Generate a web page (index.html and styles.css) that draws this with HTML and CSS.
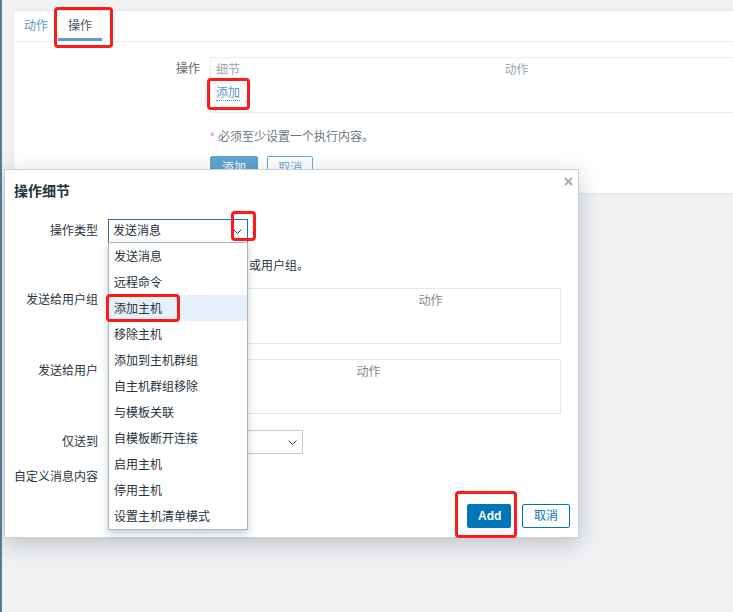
FILE: index.html
```
<!DOCTYPE html>
<html lang="zh-CN">
<head>
    <meta charset="UTF-8">
    <title>动作 | 操作</title>
    <link rel="stylesheet" href="styles.css">
</head>
<body>
    <div class="page">
        <div class="panel">
            <ul class="tabs">
                <li>动作</li>
                <li class="active">操作</li>
            </ul>
            <div class="tab-body">
                <div class="form-row">
                    <div class="form-label">操作</div>
                    <div class="form-field">
                        <table class="list-table op-table">
                            <thead>
                                <tr><th class="col-detail">细节</th><th>动作</th></tr>
                            </thead>
                            <tbody>
                                <tr><td colspan="2"><a class="link-dotted">添加</a></td></tr>
                            </tbody>
                        </table>
                    </div>
                </div>
                <div class="form-row note-row">
                    <div class="form-label"></div>
                    <div class="form-field"><span class="asterisk">*</span> 必须至少设置一个执行内容。</div>
                </div>
                <div class="form-row button-row">
                    <div class="form-label"></div>
                    <div class="form-field">
                        <button class="btn btn-faded">添加</button>
                        <button class="btn btn-faded-alt">取消</button>
                    </div>
                </div>
            </div>
        </div>
    </div>

    <div class="dialog">
        <div class="dialog-title">操作细节</div>
        <span class="dialog-close">
            <svg width="9" height="9" viewBox="0 0 9 9"><path d="M1 1 L8 8 M8 1 L1 8" stroke="#a7b1b8" stroke-width="2"/></svg>
        </span>

        <div class="dialog-form">
            <div class="d-row row-type">
                <div class="d-label">操作类型</div>
                <div class="d-field">
                    <div class="select select-focus">
                        <span>发送消息</span>
                        <svg class="chevron" width="9" height="6" viewBox="0 0 9 6"><path d="M0.5 0.5 L4.5 4.5 L8.5 0.5" fill="none" stroke="#3b474f" stroke-width="1"/></svg>
                        <ul class="dropdown">
                            <li>发送消息</li>
                            <li>远程命令</li>
                            <li class="hover">添加主机</li>
                            <li>移除主机</li>
                            <li>添加到主机群组</li>
                            <li>自主机群组移除</li>
                            <li>与模板关联</li>
                            <li>自模板断开连接</li>
                            <li>启用主机</li>
                            <li>停用主机</li>
                            <li>设置主机清单模式</li>
                        </ul>
                    </div>
                </div>
            </div>

            <div class="d-row row-hint">
                <div class="d-label"></div>
                <div class="d-field hint">或用户组。</div>
            </div>

            <div class="d-row row-groups">
                <div class="d-label">发送给用户组</div>
                <div class="d-field">
                    <table class="list-table dlg-table">
                        <thead><tr><th class="col-groups"></th><th>动作</th></tr></thead>
                        <tbody><tr><td colspan="2"></td></tr></tbody>
                    </table>
                </div>
            </div>

            <div class="d-row row-users">
                <div class="d-label">发送给用户</div>
                <div class="d-field">
                    <table class="list-table dlg-table">
                        <thead><tr><th class="col-users"></th><th>动作</th></tr></thead>
                        <tbody><tr><td colspan="2"></td></tr></tbody>
                    </table>
                </div>
            </div>

            <div class="d-row row-media">
                <div class="d-label">仅送到</div>
                <div class="d-field">
                    <div class="select select-wide">
                        <svg class="chevron" width="9" height="6" viewBox="0 0 9 6"><path d="M0.5 0.5 L4.5 4.5 L8.5 0.5" fill="none" stroke="#3b474f" stroke-width="1"/></svg>
                    </div>
                </div>
            </div>

            <div class="d-row row-custom">
                <div class="d-label">自定义消息内容</div>
                <div class="d-field"><span class="checkbox"></span></div>
            </div>
        </div>

        <div class="dialog-footer">
            <button class="btn btn-main">Add</button>
            <button class="btn btn-alt">取消</button>
        </div>
    </div>

    <div class="mark mark-tab"></div>
    <div class="mark mark-link"></div>
    <div class="mark mark-arrow"></div>
    <div class="mark mark-item"></div>
    <div class="mark mark-add"></div>
</body>
</html>
```

FILE: styles.css
```
* {
    margin: 0;
    padding: 0;
    box-sizing: border-box;
}

body {
    width: 733px;
    height: 612px;
    overflow: hidden;
    background-color: #f0f1f3;
    border-left: 2px solid #5a7c98;
    font-family: "Liberation Sans", "Noto Sans CJK SC", sans-serif;
    font-size: 12px;
    color: #1f2c33;
}

/* background page */

.page {
    padding: 10px 0 0 11px;
}

.panel {
    width: 740px;
    height: 184px;
    background-color: #fff;
    border: 1px solid #e4e7e9;
    border-right: none;
}

.tabs {
    display: flex;
    list-style: none;
    border-bottom: 1px solid #ebeef0;
}

.tabs li {
    padding: 4px 10px 0;
    line-height: 23px;
    border-bottom: 3px solid transparent;
    color: #5b98c6;
}

.tabs li.active {
    color: #4a565e;
    border-bottom-color: #5d9dcc;
}

.tab-body {
    padding-top: 15px;
}

.form-row {
    display: flex;
    gap: 10px;
}

.form-label {
    width: 186px;
    flex-shrink: 0;
    text-align: right;
    padding-top: 1px;
    line-height: 23px;
    color: #5b666d;
}

.list-table {
    border-collapse: collapse;
    table-layout: fixed;
    border: 1px solid #ebeef0;
}

.list-table th {
    height: 24px;
    padding: 1px 5px 0;
    text-align: left;
    font-weight: normal;
    color: #9ba6ae;
    line-height: 23px;
}

.list-table td {
    height: 30px;
    padding: 0 5px;
    vertical-align: top;
    line-height: 20px;
}

.op-table {
    width: 540px;
}

.col-detail {
    width: 289px;
}

.link-dotted {
    display: inline-block;
    line-height: 14px;
    margin-top: 4px;
    color: #5a95c6;
    border-bottom: 1px dotted #5a95c6;
}

.note-row {
    margin-top: 14px;
    padding-top: 1px;
    line-height: 18px;
    color: #6c767d;
}

.asterisk {
    color: #ee8a8a;
}

.button-row {
    margin-top: 10px;
}

.btn {
    height: 24px;
    padding: 0 10px;
    border-radius: 2px;
    font-family: inherit;
    font-size: 12px;
    line-height: 22px;
    cursor: pointer;
}

.btn-faded {
    width: 48px;
    background-color: #5ea3d1;
    border: 1px solid #5ea3d1;
    color: #fff;
}

.btn-faded-alt {
    width: 46px;
    margin-left: 6px;
    background-color: #fff;
    border: 1px solid #6fa9d4;
    color: #6fa9d4;
}

/* dialog */

.dialog {
    position: absolute;
    left: 4px;
    top: 169px;
    width: 575px;
    height: 369px;
    display: flex;
    flex-direction: column;
    background-color: #fff;
    border: 1px solid #c9d1d6;
    box-shadow: 0 6px 22px rgba(60, 80, 95, 0.28);
}

.dialog-title {
    padding: 11px 9px 0;
    line-height: 20px;
    font-size: 14px;
    font-weight: bold;
    color: #26323a;
}

.dialog-close {
    position: absolute;
    top: 7px;
    right: 5px;
    width: 9px;
    height: 9px;
}

.dialog-close svg {
    display: block;
}

.dialog-form {
    margin-top: 18px;
}

.d-row {
    display: flex;
    gap: 10px;
}

.d-label {
    width: 93px;
    flex-shrink: 0;
    text-align: right;
    padding-top: 1px;
    line-height: 23px;
    color: #2a353c;
}

.row-hint {
    margin-top: 14px;
    line-height: 18px;
}

.hint {
    padding-left: 141px;
    color: #2a353c;
}

.row-groups {
    margin-top: 13px;
}

.row-users {
    margin-top: 15px;
}

.row-media {
    margin-top: 16px;
}

.row-custom {
    margin-top: 11px;
}

.dlg-table {
    width: 453px;
    border-color: #e4e7ea;
}

.dlg-table th {
    color: #7f8a92;
}

.dlg-table td {
    height: 30px;
}

.col-groups {
    width: 305px;
}

.col-users {
    width: 243px;
}

.select {
    position: relative;
    width: 140px;
    height: 24px;
    padding: 1px 0 0 4px;
    line-height: 21px;
    border: 1px solid #c3ccd2;
    background-color: #fff;
    color: #1f2c33;
}

.select-focus {
    border-color: #2f6ea8;
}

.select-wide {
    width: 195px;
}

.chevron {
    position: absolute;
    right: 5px;
    top: 9px;
}

.dropdown {
    position: absolute;
    top: 22px;
    left: -1px;
    width: 140px;
    list-style: none;
    background-color: #fff;
    border: 1px solid #aab6be;
    box-shadow: 0 4px 8px rgba(40, 60, 75, 0.25);
    z-index: 2;
}

.dropdown li {
    height: 26px;
    padding: 2px 0 0 5px;
    line-height: 24px;
    color: #26323a;
    white-space: nowrap;
}

.dropdown li.hover {
    background-color: #e6f0fa;
}

.checkbox {
    display: inline-block;
    width: 14px;
    height: 14px;
    margin-top: 5px;
    border: 1px solid #c3ccd2;
}

.dialog-footer {
    margin-top: auto;
    display: flex;
    justify-content: flex-end;
    gap: 11px;
    padding: 0 8px 9px;
}

.btn-main {
    width: 44px;
    background-color: #0275b8;
    border: 1px solid #0275b8;
    color: #fff;
    font-weight: bold;
}

.btn-alt {
    width: 48px;
    background-color: #fff;
    border: 1px solid #0275b8;
    color: #0275b8;
}

/* red annotation boxes */

.mark {
    position: absolute;
    border: 3px solid #ff1a1a;
    border-radius: 4px;
    z-index: 5;
}

.mark-tab {
    left: 54px;
    top: 7px;
    width: 59px;
    height: 41px;
}

.mark-link {
    left: 207px;
    top: 78px;
    width: 43px;
    height: 32px;
}

.mark-arrow {
    left: 231px;
    top: 211px;
    width: 25px;
    height: 30px;
}

.mark-item {
    left: 106px;
    top: 294px;
    width: 74px;
    height: 28px;
}

.mark-add {
    left: 455px;
    top: 491px;
    width: 62px;
    height: 47px;
}
```
